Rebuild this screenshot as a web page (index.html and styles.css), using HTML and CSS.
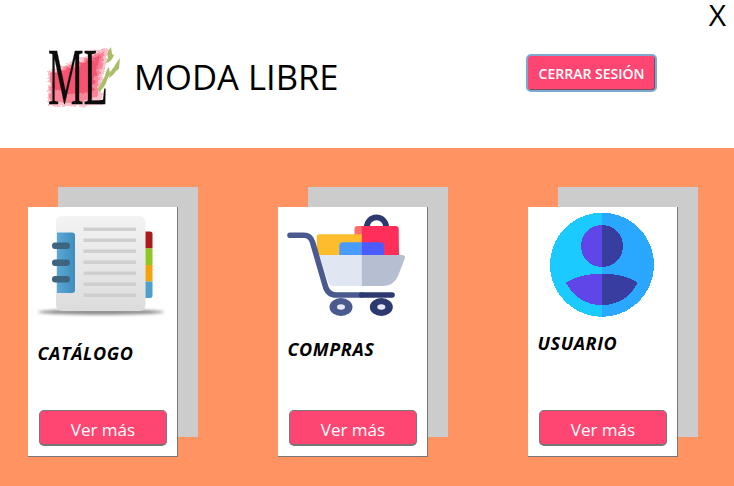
FILE: index.html
```html
<!DOCTYPE html>
<html lang="es">
<head>
<meta charset="utf-8">
<title>Moda Libre</title>
<link rel="stylesheet" href="styles.css">
</head>
<body>
<header class="header">
  <svg class="logo" viewBox="0 0 72 60" width="72" height="60" aria-label="ML">
    <defs>
      <filter id="paint" x="-10%" y="-10%" width="120%" height="120%">
        <feTurbulence type="fractalNoise" baseFrequency="0.12 0.3" numOctaves="3" seed="4"/>
        <feDisplacementMap in="SourceGraphic" scale="6"/>
        <feGaussianBlur stdDeviation="0.5"/>
      </filter>
    </defs>
    <g filter="url(#paint)">
      <path d="M0 26 L28 15 L58 1 L62 5 L57 18 L54 40 L54 59 L20 60 L0 60 Z" fill="#fbc3cc"/>
      <path d="M2 28 L30 17 L56 4 L54 18 L50 34 L50 52 L20 57 L2 55 Z" fill="#fa8598"/>
      <path d="M6 28 L30 20 L52 9 L48 28 L44 46 L20 48 L4 42 Z" fill="#f5536f"/>
    </g>
    <path d="M63 1 Q58 7 60 12 L57 17 Q64 16 66 9 L64 8 Z" fill="#a9bd6a"/>
    <path d="M72 12 Q68 17 66 21 L62 26 L61 32 Q65 30 68 25 L71 23 Z" fill="#a9bd6a"/>
    <path d="M61 21 Q58 24 57 30 L50 43 L51 46 Q58 40 59 34 L62 28 Z" fill="#a9bd6a"/>
    <text class="logo-text" transform="translate(0 58) scale(0.5 1)" x="0" y="0">ML</text>
  </svg>
  <h1 class="brand">MODA LIBRE</h1>
  <button class="logout" type="button">CERRAR SESIÓN</button>
  <span class="close">X</span>
</header>

<main class="cards">
  <article class="card">
    <svg class="icon" viewBox="0 0 150 114" width="150" height="114">
      <defs>
        <linearGradient id="cover" x1="0" y1="0" x2="0" y2="1">
          <stop offset="0" stop-color="#f3f3f3"/>
          <stop offset="1" stop-color="#dcdcdc"/>
        </linearGradient>
        <linearGradient id="spine" x1="0" y1="0" x2="1" y2="0">
          <stop offset="0" stop-color="#5aa8d4"/>
          <stop offset="1" stop-color="#3f8dbd"/>
        </linearGradient>
        <filter id="soft" x="-10%" y="-100%" width="120%" height="300%">
          <feGaussianBlur stdDeviation="1.4"/>
        </filter>
      </defs>
      <ellipse cx="73" cy="105" rx="63" ry="2.8" fill="#8c8c8c" filter="url(#soft)"/>
      <rect x="28" y="9" width="89.500" height="95" rx="6" fill="url(#cover)"/>
      <path d="M29 25.500 H44 Q47 25.500 47 28.500 V83 Q47 86 44 86 H29 Z" fill="url(#spine)"/>
      <g fill="#3e6580">
        <rect x="24" y="35.500" width="18" height="6.500" rx="3"/>
        <rect x="24" y="52.500" width="18" height="6.500" rx="3"/>
        <rect x="24" y="69" width="18" height="6.500" rx="3"/>
      </g>
      <g fill="#cfcfcd">
        <rect x="55.500" y="20.500" width="52.500" height="3.500"/>
        <rect x="55.500" y="31.500" width="52.500" height="3.500"/>
        <rect x="55.500" y="42.500" width="52.500" height="3.500"/>
        <rect x="55.500" y="53.500" width="52.500" height="3.500"/>
        <rect x="55.500" y="64.500" width="52.500" height="3.500"/>
        <rect x="55.500" y="75.500" width="52.500" height="3.500"/>
        <rect x="55.500" y="86.500" width="52.500" height="3.500"/>
      </g>
      <path d="M117.500 24.500 H122 Q124.500 24.500 124.500 27 V41.500 H117.500 Z" fill="#a81c1e"/>
      <rect x="117.500" y="41.500" width="7" height="16.500" fill="#8ec626"/>
      <rect x="117.500" y="58" width="7" height="16.500" fill="#f2a40e"/>
      <path d="M117.500 74.500 H124.500 V89 Q124.500 91 122 91 H117.500 Z" fill="#4f9fca"/>
    </svg>
    <h2 class="card-title card-title-catalog">CATÁLOGO</h2>
    <button class="more" type="button">Ver más</button>
  </article>

  <article class="card">
    <svg class="icon" viewBox="0 0 150 110" width="150" height="110">
      <path d="M88.800 20 A9.700 9.700 0 0 1 108.200 20" fill="none" stroke="#2c3a70" stroke-width="5.700"/>
      <path d="M76.500 48 V21.500 Q76.500 19 79 19 H84 V48 Z" fill="#ff6d6d"/>
      <path d="M83.700 19 H118 Q120.500 19 120.700 21.500 L121 48 H83.700 Z" fill="#ff2f5a"/>
      <path d="M38.700 48 V30 Q38.700 27.300 41.500 27.300 H83.700 V48 Z" fill="#fcbc2c"/>
      <path d="M61.300 48 V39 Q61.300 35.300 65 35.300 H83.700 V48 Z" fill="#4a9bff"/>
      <path d="M83.700 35.300 H102 Q106 35.300 106 39 V48 H83.700 Z" fill="#4b5cff"/>
      <path d="M41.300 48 H83.700 V79 H55 Q52 79 50 75 Z" fill="#e0e6f2"/>
      <path d="M83.700 48 H124.500 Q127.500 48.500 127 51 L120 69 Q116 79 104 79 H83.700 Z" fill="#b5bfd1"/>
      <path d="M12 28.300 H26 Q32.500 28.300 34.500 35 L47 78 Q49.500 88 58 88 H83.700" fill="none" stroke="#4a5a8f" stroke-width="5.600" stroke-linecap="round"/>
      <path d="M83.700 88 H114" fill="none" stroke="#2c3a70" stroke-width="5.600" stroke-linecap="round"/>
      <ellipse cx="63" cy="100" rx="11.500" ry="9" fill="#4a5a8f"/>
      <ellipse cx="103.300" cy="100" rx="11.500" ry="9" fill="#2c3a70"/>
      <ellipse cx="63" cy="100" rx="4" ry="2.800" fill="#e6eaf4"/>
      <ellipse cx="103.300" cy="100" rx="4" ry="2.800" fill="#e6eaf4"/>
    </svg>
    <h2 class="card-title card-title-cart">COMPRAS</h2>
    <button class="more" type="button">Ver más</button>
  </article>

  <article class="card">
    <svg class="icon" viewBox="0 0 150 110" width="150" height="110" shape-rendering="crispEdges">
      <path d="M74 5.700 A52 52 0 0 0 74 109.700 Z" fill="#1bcbff"/>
      <path d="M74 5.700 A52 52 0 0 1 74 109.700 Z" fill="#2aa8ff"/>
      <path d="M74 18 A21 21 0 0 0 74 60 Z" fill="#6045e8"/>
      <path d="M74 18 A21 21 0 0 1 74 60 Z" fill="#383ea0"/>
      <path d="M74 66.700 Q51 66.700 38 75.700 Q50 98 74 98 Z" fill="#6045e8"/>
      <path d="M74 66.700 Q97 66.700 109.700 75.700 Q98 98 74 98 Z" fill="#383ea0"/>
    </svg>
    <h2 class="card-title card-title-user">USUARIO</h2>
    <button class="more" type="button">Ver más</button>
  </article>
</main>
</body>
</html>
```

FILE: styles.css
```css
* {
  box-sizing: border-box;
}

html,
body {
  margin: 0;
  height: 100%;
}

body {
  width: 734px;
  height: 486px;
  overflow: hidden;
  display: flex;
  flex-direction: column;
  font-family: "Open Sans", "Liberation Sans", sans-serif;
  background: #ff9362;
}

.header {
  position: relative;
  flex: 0 0 148px;
  display: flex;
  align-items: center;
  padding: 4px 77px 0 48px;
  background: #fff;
}

.logo {
  flex: none;
  display: block;
  overflow: visible;
}

.logo-text {
  font-family: "Liberation Serif", serif;
  font-size: 80px;
  fill: #0c0c0c;
  stroke: #0c0c0c;
  stroke-width: 0.3px;
}

.brand {
  margin: 2px 0 0 14px;
  font-size: 34.6px;
  font-weight: 400;
  line-height: 1;
  color: #000;
}

.logout {
  margin: -6px 0 0 auto;
  width: 131px;
  height: 38px;
  padding: 0;
  border: 2px solid #7fa8d0;
  border-radius: 5px;
  outline: 0;
  background: #ff4672;
  box-shadow: inset -1px -1px 0 #75505e;
  font-family: inherit;
  font-size: 14px;
  font-weight: 600;
  color: #fff;
}

.close {
  position: absolute;
  top: 0;
  right: 8px;
  font-size: 30px;
  line-height: 30px;
  color: #000;
}

.cards {
  flex: 1;
  display: flex;
  gap: 100px;
  padding: 59px 0 29px 28px;
}

.card {
  position: relative;
  width: 150px;
  height: 250px;
  display: flex;
  flex-direction: column;
  background: #fff;
  box-shadow: inset -1px -1px 0 #777;
}

.card::before {
  content: "";
  position: absolute;
  z-index: -1;
  left: 30px;
  top: -20px;
  width: 140px;
  height: 250px;
  background: #ccc;
}

.icon {
  flex: none;
  display: block;
}

.card-title {
  margin: 0;
  padding-left: 9.500px;
  font-size: 18px;
  font-weight: 700;
  font-style: italic;
  letter-spacing: 0.6px;
  line-height: 24px;
  color: #000;
}

.card-title-catalog {
  margin-top: 20px;
}

.card-title-cart {
  margin-top: 20px;
}

.card-title-user {
  margin-top: 14px;
}

.more {
  margin: auto 11px 11px;
  width: 128px;
  height: 36px;
  flex: none;
  padding: 3px 0 0;
  border: 1px solid #777;
  border-bottom-width: 2px;
  border-radius: 5px;
  background: #ff4672;
  font-family: inherit;
  font-size: 17px;
  color: #fff;
}
```
